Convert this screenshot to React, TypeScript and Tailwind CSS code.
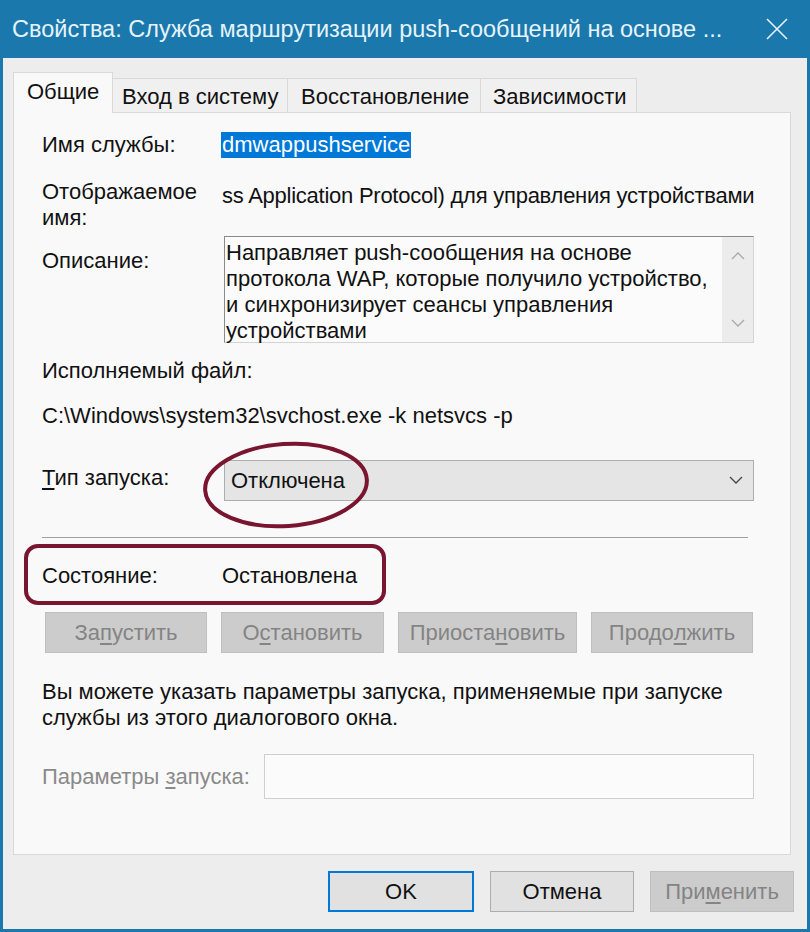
import React from "react";

const font = { fontFamily: '"Liberation Sans", Arial, sans-serif' };

function U({ children }: { children: React.ReactNode }) {
  return <span className="underline underline-offset-[3px]">{children}</span>;
}

function Chevron({ dir, className }: { dir: "up" | "down"; className?: string }) {
  return (
    <svg width="14" height="9" viewBox="0 0 14 9" className={className}>
      <polyline
        points={dir === "up" ? "1,8 7,2 13,8" : "1,1 7,7 13,1"}
        fill="none"
        stroke="currentColor"
        strokeWidth="1.3"
      />
    </svg>
  );
}

function DisabledButton({ children, className }: { children: React.ReactNode; className?: string }) {
  return (
    <div
      className={`h-[41px] flex items-center justify-center bg-[#cccccc] border border-[#bfbfbf] text-[#848484] ${className ?? ""}`}
    >
      {children}
    </div>
  );
}

export default function App() {
  return (
    <div
      className="w-[810px] h-[932px] bg-[#1a78ad] flex flex-col px-[3px] pb-[3px] text-[22px] text-[#111] leading-[26px]"
      style={font}
    >
      {/* title bar */}
      <div className="h-[58px] shrink-0 flex items-center justify-between pl-[9px] pr-[18px] text-[#e6f3fa] text-[23.5px]">
        <span>Свойства: Служба маршрутизации push-сообщений на основе ...</span>
        <svg width="24" height="24" viewBox="0 0 24 24">
          <path d="M2 2 L22 22 M22 2 L2 22" stroke="#e6f3fa" strokeWidth="1.6" fill="none" />
        </svg>
      </div>

      {/* body */}
      <div className="flex-1 bg-[#ededed] flex flex-col">
        {/* tabs */}
        <div className="mt-[14px] ml-[10px] flex items-end h-[41px] relative z-10">
          <div className="h-[41px] w-[100px] border border-b-0 border-[#d9d9d9] bg-[#f9f9f9] flex items-center pl-[13px] pb-[2px]">
            Общие
          </div>
          <div className="h-[35px] w-[175px] border border-l-0 border-[#d9d9d9] bg-[#f0f0f0] flex items-center pl-[9px] pt-[2px]">
            Вход в систему
          </div>
          <div className="h-[35px] w-[193px] border border-l-0 border-[#d9d9d9] bg-[#f0f0f0] flex items-center pl-[13px] pt-[2px]">
            Восстановление
          </div>
          <div className="h-[35px] w-[156px] border border-l-0 border-[#d9d9d9] bg-[#f0f0f0] flex items-center pl-[12px] pt-[2px]">
            Зависимости
          </div>
        </div>

        {/* panel */}
        <div className="ml-[10px] -mt-[1px] w-[778px] h-[743px] border border-[#d9d9d9] bg-[#f9f9f9] relative flex flex-col pl-[28px]">
          {/* service name */}
          <div className="mt-[19px] flex h-[26px]">
            <div className="w-[180px]">Имя службы:</div>
            <div className="bg-[#0078d7] text-white px-[1px] -ml-[1px]">dmwappushservice</div>
          </div>

          {/* display name */}
          <div className="mt-[21px] flex">
            <div className="w-[180px]">
              <div>Отображаемое</div>
              <div>имя:</div>
            </div>
            <div className="mt-[4px] whitespace-nowrap tracking-[-0.25px]">
              ss Application Protocol) для управления устройствами
            </div>
          </div>

          {/* description */}
          <div className="mt-[5px] flex">
            <div className="w-[182px] mt-[12px]">Описание:</div>
            <div className="w-[530px] h-[107px] border border-[#d4d4d4] border-t-[#8a8a8a] border-l-[#8a8a8a] bg-[#fbfbfb] flex">
              <div className="flex-1 pl-[1px] pt-[3px]">
                <div>Направляет push-сообщения на основе</div>
                <div>протокола WAP, которые получило устройство,</div>
                <div>и синхронизирует сеансы управления</div>
                <div>устройствами</div>
              </div>
              <div className="w-[31px] bg-[#ececec] flex flex-col items-center justify-between py-[14px] text-[#a8a8a8]">
                <Chevron dir="up" />
                <Chevron dir="down" />
              </div>
            </div>
          </div>

          <div className="mt-[15px]">Исполняемый файл:</div>
          <div className="mt-[19px]">C:\Windows\system32\svchost.exe -k netsvcs -p</div>

          {/* startup type */}
          <div className="mt-[31px] flex items-center">
            <div className="w-[182px] -mt-[5px]">
              <U>Т</U>ип запуска:
            </div>
            <div className="w-[530px] h-[41px] bg-[#e5e5e5] border border-[#adadad] flex items-center justify-between pl-[6px] pr-[10px]">
              <span>Отключена</span>
              <Chevron dir="down" className="text-[#444]" />
            </div>
          </div>

          <div className="mt-[36px] w-[706px] h-[2px] border-t border-[#a0a0a0] border-b-white" />

          {/* state */}
          <div className="mt-[24px] flex">
            <div className="w-[180px]">Состояние:</div>
            <div>Остановлена</div>
          </div>

          <div className="mt-[23px] ml-[3px] flex gap-[14px]">
            <DisabledButton className="w-[162px]">
              За<U>п</U>устить
            </DisabledButton>
            <DisabledButton className="w-[163px]">
              О<U>с</U>тановить
            </DisabledButton>
            <DisabledButton className="w-[179px]">
              Приоста<U>н</U>овить
            </DisabledButton>
            <DisabledButton className="w-[162px]">
              Продо<U>л</U>жить
            </DisabledButton>
          </div>

          <div className="mt-[26px]">
            <div>Вы можете указать параметры запуска, применяемые при запуске</div>
            <div>службы из этого диалогового окна.</div>
          </div>

          <div className="mt-[23px] flex items-center">
            <div className="w-[222px] text-[#8a8a8a]">
              Параметры <U>з</U>апуска:
            </div>
            <div className="w-[490px] h-[45px] border border-[#cfcfcf] bg-[#fbfbfb]" />
          </div>

          {/* annotations */}
          <svg className="absolute left-[186px] top-[326px]" width="172" height="92" viewBox="0 0 172 92">
            <ellipse cx="86" cy="46" rx="81" ry="41" fill="none" stroke="#7a1530" strokeWidth="4" transform="rotate(-4 86 46)" />
          </svg>
          <svg className="absolute left-[10px] top-[431px]" width="364" height="62" viewBox="0 0 364 62">
            <rect x="2" y="2" width="358" height="57" rx="12" fill="none" stroke="#7a1530" strokeWidth="4" />
          </svg>
        </div>

        {/* footer buttons */}
        <div className="mt-[16px] flex justify-end gap-[16px] pr-[13px]">
          <div className="w-[146px] h-[41px] flex items-center justify-center bg-[#e1e1e1] border-2 border-[#0078d7]">
            OK
          </div>
          <div className="w-[144px] h-[41px] flex items-center justify-center bg-[#e1e1e1] border border-[#adadad]">
            Отмена
          </div>
          <DisabledButton className="w-[144px]">
            При<U>м</U>енить
          </DisabledButton>
        </div>
      </div>
    </div>
  );
}
